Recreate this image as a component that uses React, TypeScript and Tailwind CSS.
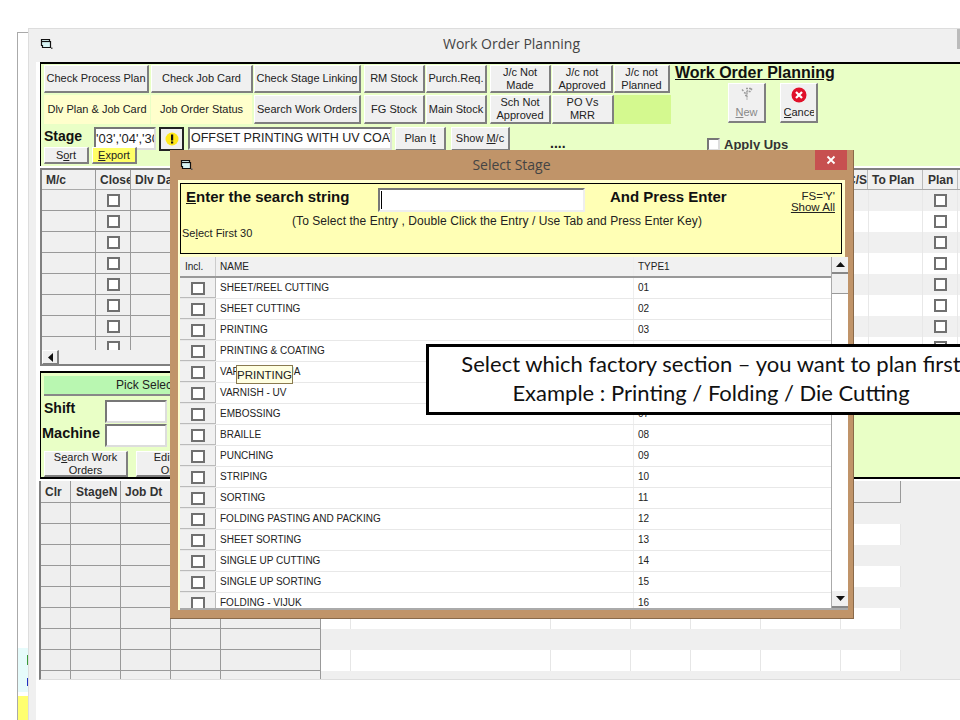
import React from "react";

const raised = "bg-[#f0f0f0] border border-t-white border-l-white border-r-[#7f7f7f] border-b-[#7f7f7f] border-r-2 border-b-2 flex items-center justify-center text-center text-[11px] leading-[13px] text-[#222] shrink-0 whitespace-nowrap";
const inset = "bg-white border-2 border-t-[#777] border-l-[#777] border-r-[#ddd] border-b-[#ddd] shrink-0";
const scrollBtn = "bg-[#f0f0f0] border-b-2 border-[#888] flex items-center justify-center shrink-0";

function WinIcon() {
  return (
    <svg width="13" height="12" viewBox="0 0 13 12" className="shrink-0">
      <path d="M1.5 1.5h8v2h1v6h-8v-2h-1z" fill="#d8f4f4" stroke="#111" strokeWidth="1.2" />
      <path d="M2 3.5h8" stroke="#111" strokeWidth="1.2" />
      <rect x="11" y="9.5" width="1.5" height="1.5" fill="#555" />
    </svg>
  );
}

function Check() {
  return <div className="w-[13px] h-[13px] border-[2.5px] border-[#707070] bg-white shrink-0" />;
}

function ArrowUp() {
  return <svg width="9" height="5" viewBox="0 0 9 5"><path d="M4.5 0L9 5H0z" fill="#111" /></svg>;
}
function ArrowDown() {
  return <svg width="9" height="5" viewBox="0 0 9 5"><path d="M4.5 5L9 0H0z" fill="#111" /></svg>;
}

const upperRows = [0, 1, 2, 3, 4, 5, 6, 7];
const lowerRows = [0, 1, 2, 3, 4, 5, 6, 7, 8];

const stages = [
  ["SHEET/REEL CUTTING", "01"],
  ["SHEET CUTTING", "02"],
  ["PRINTING", "03"],
  ["PRINTING & COATING", "04"],
  ["VARNISH - AQUA", "05"],
  ["VARNISH - UV", "06"],
  ["EMBOSSING", "07"],
  ["BRAILLE", "08"],
  ["PUNCHING", "09"],
  ["STRIPING", "10"],
  ["SORTING", "11"],
  ["FOLDING PASTING AND PACKING", "12"],
  ["SHEET SORTING", "13"],
  ["SINGLE UP CUTTING", "14"],
  ["SINGLE UP SORTING", "15"],
  ["FOLDING - VIJUK", "16"],
];

function TopPanel() {
  return (
    <div className="h-[104px] bg-[#e9ffc6] border-t-2 border-l border-black border-b-0 flex shrink-0">
      <div className="w-[634px] shrink-0 pl-[3px] pt-[1px] flex flex-col">
        <div className="flex h-[28px]">
          <div className={`${raised} w-[105px]`}>Check Process Plan</div>
          <div className={`${raised} w-[102px] ml-[2px]`}>Check Job Card</div>
          <div className={`${raised} w-[107px] ml-[1px]`}>Check Stage Linking</div>
          <div className={`${raised} w-[61px] ml-[3px]`}>RM Stock</div>
          <div className={`${raised} w-[61px] ml-[1px]`}>Purch.Req.</div>
          <div className={`${raised} w-[61px] ml-[3px]`}><span>J/c Not<br />Made</span></div>
          <div className={`${raised} w-[61px] ml-[1px]`}><span>J/c not<br />Approved</span></div>
          <div className={`${raised} w-[56px] ml-[1px]`}><span>J/c not<br />Planned</span></div>
        </div>
        <div className="flex h-[29px] mt-[2px]">
          <div className={`${raised} w-[106px] !bg-[#ffffcc] !border-0`}>Dlv Plan &amp; Job Card</div>
          <div className={`${raised} w-[101px] ml-[1px] !bg-[#ffffcc] !border-0`}>Job Order Status</div>
          <div className={`${raised} w-[107px] ml-[2px]`}>Search Work Orders</div>
          <div className={`${raised} w-[61px] ml-[3px]`}>FG Stock</div>
          <div className={`${raised} w-[61px] ml-[1px]`}>Main Stock</div>
          <div className={`${raised} w-[61px] ml-[3px]`}><span>Sch Not<br />Approved</span></div>
          <div className={`${raised} w-[62px] ml-[1px]`}><span>PO Vs<br />MRR</span></div>
          <div className="w-[57px] bg-[#d4f98f] shrink-0" />
        </div>
        <div className="flex items-start mt-[3px] h-[24px]">
          <div className="w-[50px] font-bold text-[14px] leading-[16px] text-[#111] mt-[1px]">Stage</div>
          <div className={`${inset} w-[62px] h-[23px] text-[13px] leading-[19px] text-[#222] overflow-hidden whitespace-nowrap`}>'03','04','30</div>
          <div className="w-[25px] h-[24px] ml-[3px] bg-[#f0f0f0] border-2 border-[#222] flex items-center justify-center shrink-0">
            <svg width="14" height="14" viewBox="0 0 14 14">
              <circle cx="7" cy="7" r="6.5" fill="#ffe81a" />
              <rect x="6" y="2.5" width="2.2" height="6" fill="#111" />
              <rect x="6" y="9.5" width="2.2" height="2" fill="#111" />
            </svg>
          </div>
          <div className={`${inset} w-[204px] h-[23px] ml-[4px] text-[12.5px] leading-[19px] text-[#222] overflow-hidden whitespace-nowrap pl-[1px]`}>OFFSET PRINTING WITH UV COATING</div>
          <div className={`${raised} w-[51px] h-[24px] ml-[3px]`}><span>Plan I<u>t</u></span></div>
          <div className={`${raised} w-[59px] h-[24px] ml-[5px]`}><span>Show <u>M</u>/c</span></div>
          <div className="ml-[40px] mt-[9px] font-bold text-[14px] leading-[14px] text-[#222]">....</div>
        </div>
        <div className="flex mt-[-4px]">
          <div className={`${raised} w-[45px] h-[17px]`}><span>S<u>o</u>rt</span></div>
          <div className={`${raised} w-[45px] h-[17px] ml-[3px] !bg-[#ffff66]`}><span><u>E</u>xport</span></div>
        </div>
      </div>
      <div className="flex-1 flex flex-col">
        <div className="font-bold text-[16px] leading-[18px] underline text-[#111] whitespace-nowrap">Work Order Planning</div>
        <div className="flex mt-[1px] ml-[53px]">
          <div className={`${raised} w-[38px] h-[40px] !flex-col !justify-start pt-[3px] !text-[#888]`}>
            <svg width="16" height="15" viewBox="0 0 16 14">
              <path d="M3 2l2 2M7 1h6l-2 3H8l1-2M8 5v7M6 8h3M5 5l2 1" fill="none" stroke="#9a9a9a" strokeWidth="1.4" strokeDasharray="2 1" />
            </svg>
            <span className="mt-[4px]"><u>N</u>ew</span>
          </div>
          <div className={`${raised} w-[38px] h-[40px] ml-[14px] !flex-col !justify-start pt-[3px] overflow-hidden`}>
            <svg width="16" height="16" viewBox="0 0 17 17">
              <circle cx="8.5" cy="8.5" r="8" fill="#e0102a" />
              <path d="M5.3 5.3l6.4 6.4M11.7 5.3l-6.4 6.4" stroke="#fff" strokeWidth="2.4" />
            </svg>
            <span className="mt-[3px] w-[30px] overflow-hidden whitespace-nowrap text-left"><u>C</u>ance</span>
          </div>
        </div>
        <div className="flex items-center mt-[14px] ml-[32px] h-[15px]">
          <div className="w-[13px] h-[13px] bg-white border-2 border-t-[#777] border-l-[#777] border-r-[#ddd] border-b-[#ddd]" />
          <span className="ml-[4px] font-bold text-[13px] text-[#333]">Apply Ups</span>
        </div>
      </div>
    </div>
  );
}

function UpperGrid() {
  return (
    <div className="h-[198px] mt-[2px] border-2 border-[#808080] border-r-0 bg-[#f0f0f0] flex flex-col overflow-hidden shrink-0">
      <div className="flex h-[20px] shrink-0 font-bold text-[12px] text-[#333] border-b border-[#aaa] items-center">
        <div className="w-[54px] pl-[4px] h-full flex items-center border-r border-[#999]">M/c</div>
        <div className="w-[35px] h-full pl-[4px] flex items-center border-r border-[#999] overflow-hidden whitespace-nowrap">Close</div>
        <div className="flex-1 h-full pl-[4px] flex items-center whitespace-nowrap">Dlv Date</div>
        <div className="w-[14px] h-full flex items-center justify-end border-r border-[#bbb] overflow-hidden whitespace-nowrap">C/S</div>
        <div className="w-[55px] h-full pl-[4px] flex items-center border-r border-[#bbb] whitespace-nowrap">To Plan</div>
        <div className="w-[35px] h-full pl-[5px] flex items-center border-r border-[#bbb]">Plan</div>
        <div className="w-[2px] h-full shrink-0" />
      </div>
      <div className="h-[160px] overflow-hidden shrink-0">
        {upperRows.map((i) => (
          <div key={i} className={i % 2 ? "flex h-[21px] bg-white" : "flex h-[21px] bg-[#f0f0f0]"}>
            <div className="w-[54px] bg-[#f0f0f0] border-r border-b border-[#999]" />
            <div className="w-[35px] bg-[#f0f0f0] border-r border-b border-[#999] flex items-center justify-center"><Check /></div>
            <div className="w-[120px] bg-[#f0f0f0] border-b border-[#999]" />
            <div className="flex-1" />
            <div className="w-[55px] border-r border-l border-[#e8e8e8]" />
            <div className="w-[35px] border-r border-[#e8e8e8] flex items-center justify-center"><Check /></div>
            <div className="w-[2px] shrink-0" />
          </div>
        ))}
      </div>
      <div className="h-[14px] flex shrink-0 bg-[#f0f0f0]">
        <div className={`${raised} w-[17px] h-[15px] !border-r-2`}>
          <svg width="5" height="9" viewBox="0 0 5 9"><path d="M0 4.5L5 0V9z" fill="#111" /></svg>
        </div>
      </div>
    </div>
  );
}

function MidPanel() {
  return (
    <div className="h-[108px] mt-[5px] border-t-2 border-l border-b-2 border-black bg-[#e9ffc6] flex flex-col pl-[3px] pt-[3px] shrink-0">
      <div className="h-[20px] w-[400px] bg-[#b9f7b1] border-r-2 border-b-2 border-[#888] text-[12px] leading-[18px] pl-[72px] text-[#222] whitespace-nowrap">Pick Selected</div>
      <div className="flex items-center h-[23px] mt-[4px]">
        <div className="w-[61px] font-bold text-[14px] leading-[16px] text-[#111] pb-[7px]">Shift</div>
        <div className={`${inset} w-[62px] h-[23px]`} />
      </div>
      <div className="flex items-center h-[23px] mt-[1px] ml-[-2px]">
        <div className="w-[63px] font-bold text-[14.5px] leading-[16px] text-[#111] whitespace-nowrap pb-[5px]">Machine</div>
        <div className={`${inset} w-[62px] h-[23px]`} />
      </div>
      <div className="flex mt-[4px]">
        <div className={`${raised} w-[84px] h-[26px]`}><span>S<u>e</u>arch Work<br />Orders</span></div>
        <div className={`${raised} w-[84px] h-[26px] ml-[8px]`}><span>Edit Work<br />Orders</span></div>
      </div>
    </div>
  );
}

const lowerLeftCols = ["w-[30px]", "w-[50px]", "w-[50px]", "w-[50px]", "w-[100px]"];
const lowerRightCols = ["w-[30px]", "w-[200px]", "w-[80px]", "w-[60px]", "w-[70px]", "w-[80px]", "w-[60px]"];

function LowerGrid() {
  return (
    <div className="h-[199px] mt-[2px] border-l-2 border-[#808080] border-b border-b-[#ddd] bg-[#efefef] flex flex-col overflow-hidden shrink-0 ml-[-1px]">
      <div className="flex h-[22px] shrink-0 font-bold text-[12px] text-[#333]">
        <div className="w-[30px] pl-[4px] pt-[1px] h-full flex items-center border-r border-b border-[#999]">Clr</div>
        <div className="w-[50px] pl-[5px] pt-[1px] h-full flex items-center border-r border-b border-[#999]">StageN</div>
        <div className="w-[50px] pl-[4px] pt-[1px] h-full flex items-center border-r border-b border-[#999]">Job Dt</div>
        <div className="w-[50px] h-full border-r border-b border-[#999]" />
        <div className="w-[100px] h-full border-r border-b border-[#999]" />
        <div className="w-[580px] h-full border-r border-b border-[#999]" />
      </div>
      {lowerRows.map((i) => (
        <div key={i} className="flex h-[21px] shrink-0">
          {lowerLeftCols.map((c, k) => (
            <div key={k} className={`${c} border-r border-b border-[#999]`} />
          ))}
          <div className={i % 2 ? "flex w-[580px] bg-white" : "flex w-[580px]"}>
            {lowerRightCols.map((c, k) => (
              <div key={k} className={i % 2 ? `${c} border-r border-[#e6e6e6]` : c} />
            ))}
          </div>
        </div>
      ))}
    </div>
  );
}

function Dialog() {
  return (
    <div className="absolute left-[170px] top-[150px] w-[684px] h-[469px] bg-[#c09469] border-r border-b border-[#8a6a4a] flex flex-col px-[8px] pb-[8px]">
      <div className="h-[30px] flex items-center relative shrink-0 pb-[1px] pl-[2px]">
        <WinIcon />
        <div className="absolute left-0 right-0 top-[5px] text-center text-[14px] leading-[20px] text-[#444]" style={{ fontFamily: '"Open Sans", sans-serif' }}>Select Stage</div>
        <div className="absolute right-[-2px] top-0 w-[32px] h-[20px] bg-[#c75050] flex items-center justify-center">
          <svg width="10" height="10" viewBox="0 0 10 10"><path d="M1.5 1.5l7 7M8.5 1.5l-7 7" stroke="#fff" strokeWidth="1.8" /></svg>
        </div>
      </div>
      <div className="flex-1 bg-[#ffffcf] pl-[2px] pt-[3px] flex flex-col min-h-0">
        <div className="w-[662px] h-[71px] bg-[#ffffb5] border border-black shrink-0 flex flex-col text-[#222]">
          <div className="flex h-[30px] shrink-0">
            <div className="font-bold text-[15px] leading-[18px] text-[#111] ml-[5px] mt-[4px] w-[192px] whitespace-nowrap"><u>E</u>nter the search string</div>
            <div className="w-[207px] h-[24px] mt-[4px] bg-white border-2 border-t-[#777] border-l-[#777] border-r-[#eee] border-b-[#eee] flex items-center shrink-0">
              <div className="w-[1px] h-[18px] bg-black ml-[1px]" />
            </div>
            <div className="font-bold text-[15px] leading-[18px] text-[#111] ml-[25px] mt-[4px] whitespace-nowrap">And Press Enter</div>
            <div className="ml-auto mr-[6px] mt-[7px] text-right text-[11.5px] leading-[11px]">
              <div>FS='Y'</div>
              <div className="underline">Show All</div>
            </div>
          </div>
          <div className="text-[12px] leading-[14px] ml-[111px] whitespace-nowrap tracking-[0.07px]">(To Select the Entry , Double Click the Entry / Use Tab and Press Enter Key)</div>
          <div className="text-[11px] leading-[12px] ml-[1px] mt-[-1px] whitespace-nowrap">Se<u>l</u>ect First 30</div>
        </div>
        <div className="flex-1 mt-[3px] bg-white flex min-h-0 border-b-2 border-[#aaa] overflow-hidden w-[668px]">
          <div className="w-[651px] shrink-0 text-[10px] text-[#222] overflow-hidden">
            <div className="flex h-[21px] bg-[#f1f1f1] border-b-2 border-[#999] items-center">
              <div className="w-[36px] pl-[5px] h-full flex items-center border-r border-[#ccc]">Incl.</div>
              <div className="w-[418px] pl-[4px] h-full flex items-center border-r border-[#eee]">NAME</div>
              <div className="pl-[4px]">TYPE1</div>
            </div>
            {stages.map(([n, t]) => (
              <div key={t} className="flex h-[21px] border-b border-[#e8e8e8] items-center">
                <div className="w-[36px] h-full bg-[#f1f1f1] border-r border-b border-[#bbb] flex items-center justify-center pt-[2px]">
                  <div className="w-[14px] h-[13px] border-[2.5px] border-[#707070] bg-white" />
                </div>
                <div className="w-[418px] pl-[4px] pb-[2px] h-full flex items-center border-r border-[#eee] whitespace-nowrap">{n}</div>
                <div className="pl-[4px] pb-[2px]">{t}</div>
              </div>
            ))}
          </div>
          <div className="w-[17px] border-l border-[#aaa] flex flex-col shrink-0">
            <div className={`${scrollBtn} h-[17px]`}><ArrowUp /></div>
            <div className="h-[20px] bg-[#f0f0f0] border-b border-[#999]" />
            <div className="flex-1" />
            <div className={`${scrollBtn} h-[17px]`}><ArrowDown /></div>
          </div>
        </div>
      </div>
    </div>
  );
}

export default function App() {
  return (
    <div className="relative w-[960px] h-[720px] overflow-hidden bg-white" style={{ fontFamily: '"Liberation Sans", Arial, sans-serif' }}>
      <div className="absolute left-[17px] top-[32px] w-[11px] h-[688px] border-l border-t border-[#aaa] bg-white flex flex-col">
        <div className="flex-1" />
        <div className="h-[44px] bg-[#e6fbfb] flex flex-col items-end justify-around shrink-0">
          <div className="w-[1px] h-[10px] bg-[#3a9a3a]" />
          <div className="w-[1px] h-[8px] bg-[#2030c0]" />
        </div>
        <div className="h-[4px] shrink-0" />
        <div className="h-[24px] bg-[#ffff70] shrink-0" />
      </div>

      <div className="absolute left-[28px] top-[28px] w-[932px] h-[692px] bg-[#f0f0f0] border-t border-l border-[#ddd] flex flex-col">
        <div className="h-[33px] relative flex items-center pl-[11px] pb-[4px] shrink-0">
          <WinIcon />
          <div className="absolute left-[34px] right-0 top-[5px] text-center text-[14px] leading-[20px] text-[#444]" style={{ fontFamily: '"Open Sans", sans-serif' }}>Work Order Planning</div>
          <div className="absolute right-0 top-0 w-[3px] h-[20px] bg-[#bbb]" />
        </div>
        <div className="flex-1 ml-[7px] bg-white pl-[4px] flex flex-col min-h-0">
          <TopPanel />
          <UpperGrid />
          <MidPanel />
          <LowerGrid />
        </div>
      </div>

      <Dialog />

      <div className="absolute left-[236px] top-[365px] w-[57px] h-[19px] bg-[#ffffe1] border border-[#8a7a50] text-[11.5px] leading-[18px] text-center text-[#222]">PRINTING</div>

      <div className="absolute left-[426px] top-[344px] w-[570px] h-[71px] bg-white border-[3px] border-black flex flex-col items-center pt-[2px] text-[22px] leading-[29px] text-[#111] whitespace-nowrap" style={{ fontFamily: 'Lato, sans-serif' }}>
        <div>Select which factory section – you want to plan first</div>
        <div>Example : Printing / Folding / Die Cutting</div>
      </div>
    </div>
  );
}
